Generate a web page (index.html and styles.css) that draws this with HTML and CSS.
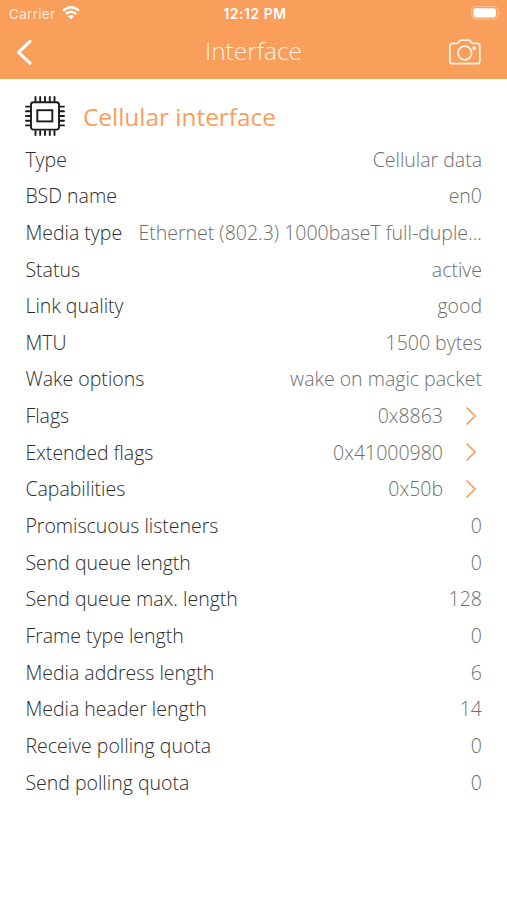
FILE: index.html
```html
<!DOCTYPE html>
<html lang="en">
<head>
<meta charset="utf-8">
<title>Interface</title>
<link rel="stylesheet" href="styles.css">
</head>
<body>
<header class="header">
  <div class="status">
    <div class="carrier"><span>Carrier</span>
      <svg class="wifi" width="18" height="14" viewBox="0 0 18 14" fill="none" stroke="#fff" stroke-width="2.4"><path d="M1 4.8Q9-2.2 17 4.8M3.9 8Q9 3.4 14.1 8"/><path d="M9 13.3 6 10.3Q9 7.9 12 10.3Z" fill="#fff" stroke="none"/></svg>
    </div>
    <div class="time">12:12 PM</div>
    <svg class="battery" width="30" height="14" viewBox="0 0 30 14"><rect x=".6" y=".6" width="26" height="12.6" rx="4" fill="none" stroke="#fff" stroke-opacity=".4"/><rect x="2.3" y="2.3" width="22.6" height="9.2" rx="2.4" fill="#fff"/><path d="M28 4.8q2 2.1 0 4.2z" fill="#fff" fill-opacity=".5"/></svg>
  </div>
  <nav class="nav">
    <svg class="back" width="18" height="28" viewBox="0 0 18 28" fill="none" stroke="#fff" stroke-width="3.2" stroke-linecap="round" stroke-linejoin="round"><path d="M15 3.4 3.6 14.3 15 25.2"/></svg>
    <h1 class="title">Interface</h1>
    <svg class="camera" width="32" height="26" viewBox="0 0 32 26" fill="none" stroke="#fff" stroke-opacity=".88" stroke-width="1.7" stroke-linejoin="round"><path d="M3.4 4.4H7.5Q9 4.4 9.8 3L10.4 2Q11 1.1 12.5 1.1H19.2Q20.6 1.1 21.2 2L21.9 3Q22.7 4.4 24.2 4.4H28.3Q30.8 4.4 30.8 6.9V22.2Q30.8 24.7 28.3 24.7H3.4Q.9 24.7.9 22.2V6.9Q.9 4.4 3.4 4.4Z"/><circle cx="15.8" cy="14" r="6.8"/><circle cx="25.3" cy="9" r="1.1"/></svg>
  </nav>
</header>
<main class="content">
  <section class="heading">
    <svg width="40" height="40" viewBox="0 0 40 40" fill="none" stroke="#1c1c1c" stroke-width="1.9"><rect x="6" y="6.2" width="28" height="27.4" rx="2.5"/><rect x="12.3" y="14.2" width="15" height="11.2"/><path stroke-linecap="round" d="M10.5 5V1M15.2 5V1M20 5V1M24.8 5V1M29.5 5V1M10.5 39v-4M15.2 39v-4M20 39v-4M24.8 39v-4M29.5 39v-4M5 10.6H1M5 15.3H1M5 20H1M5 24.7H1M5 29.4H1M39 10.6h-4M39 15.3h-4M39 20h-4M39 24.7h-4M39 29.4h-4"/></svg>
    <h2>Cellular interface</h2>
  </section>
  <dl class="list">
    <div class="row"><dt>Type</dt><dd>Cellular data</dd></div>
    <div class="row"><dt>BSD name</dt><dd>en0</dd></div>
    <div class="row"><dt>Media type</dt><dd>Ethernet (802.3) 1000baseT full-duple...</dd></div>
    <div class="row"><dt>Status</dt><dd>active</dd></div>
    <div class="row"><dt>Link quality</dt><dd>good</dd></div>
    <div class="row"><dt>MTU</dt><dd>1500 bytes</dd></div>
    <div class="row"><dt>Wake options</dt><dd>wake on magic packet</dd></div>
    <div class="row"><dt>Flags</dt><dd>0x8863</dd><svg class="more" width="12" height="20" viewBox="0 0 12 20"><path d="M1.5 1.5 10 10 1.5 18.5"/></svg></div>
    <div class="row"><dt>Extended flags</dt><dd>0x41000980</dd><svg class="more" width="12" height="20" viewBox="0 0 12 20"><path d="M1.5 1.5 10 10 1.5 18.5"/></svg></div>
    <div class="row"><dt>Capabilities</dt><dd>0x50b</dd><svg class="more" width="12" height="20" viewBox="0 0 12 20"><path d="M1.5 1.5 10 10 1.5 18.5"/></svg></div>
    <div class="row"><dt>Promiscuous listeners</dt><dd>0</dd></div>
    <div class="row"><dt>Send queue length</dt><dd>0</dd></div>
    <div class="row"><dt>Send queue max. length</dt><dd>128</dd></div>
    <div class="row"><dt>Frame type length</dt><dd>0</dd></div>
    <div class="row"><dt>Media address length</dt><dd>6</dd></div>
    <div class="row"><dt>Media header length</dt><dd>14</dd></div>
    <div class="row"><dt>Receive polling quota</dt><dd>0</dd></div>
    <div class="row"><dt>Send polling quota</dt><dd>0</dd></div>
  </dl>
</main>
</body>
</html>
```
FILE: styles.css
```css
* { box-sizing: border-box; }
body { margin: 0; background: #fff; font-family: "Open Sans", sans-serif; font-weight: 300; }
h1, h2, dl, dd { margin: 0; }
svg { display: block; flex: none; }
.header { height: 79px; background: #fa9e5b; color: #fff; }
.status { height: 26px; display: grid; grid-template-columns: 1fr auto 1fr; align-items: center; padding: 0 6px 0 9px; font-family: Inter, sans-serif; font-size: 13.5px; }
.carrier { display: flex; align-items: center; gap: 7px; font-weight: 400; color: #ffe9d9; letter-spacing: .3px; }
.carrier span { padding-top: 2px; }
.time { font-weight: 600; font-size: 13.8px; letter-spacing: .6px; padding-top: 2px; }
.battery { justify-self: end; }
.nav { height: 52px; display: grid; grid-template-columns: 1fr auto 1fr; align-items: center; padding: 0 26px 0 15px; }
.title { font-size: 24.4px; font-weight: 300; line-height: 50px; color: #fff0e5; margin: 0 0 2px 11px; }
.camera { justify-self: end; }
.content { padding: 14px 25px 0; }
.heading { height: 47.8px; display: flex; align-items: center; gap: 18px; }
.heading svg { margin-bottom: 2px; }
.heading h2 { font-size: 24.4px; font-weight: 400; color: #fa9e5b; line-height: 47px; }
.row { height: 36.65px; display: flex; align-items: center; justify-content: space-between; font-size: 19.5px; white-space: nowrap; }
.row dt { color: #2c2c2c; padding-left: .4px; }
.row dd { color: #6e6e6e; margin-left: auto; }
.more { margin: 0 5px 0 22px; fill: none; stroke: #fa9e5b; stroke-width: 1.7; }
```
